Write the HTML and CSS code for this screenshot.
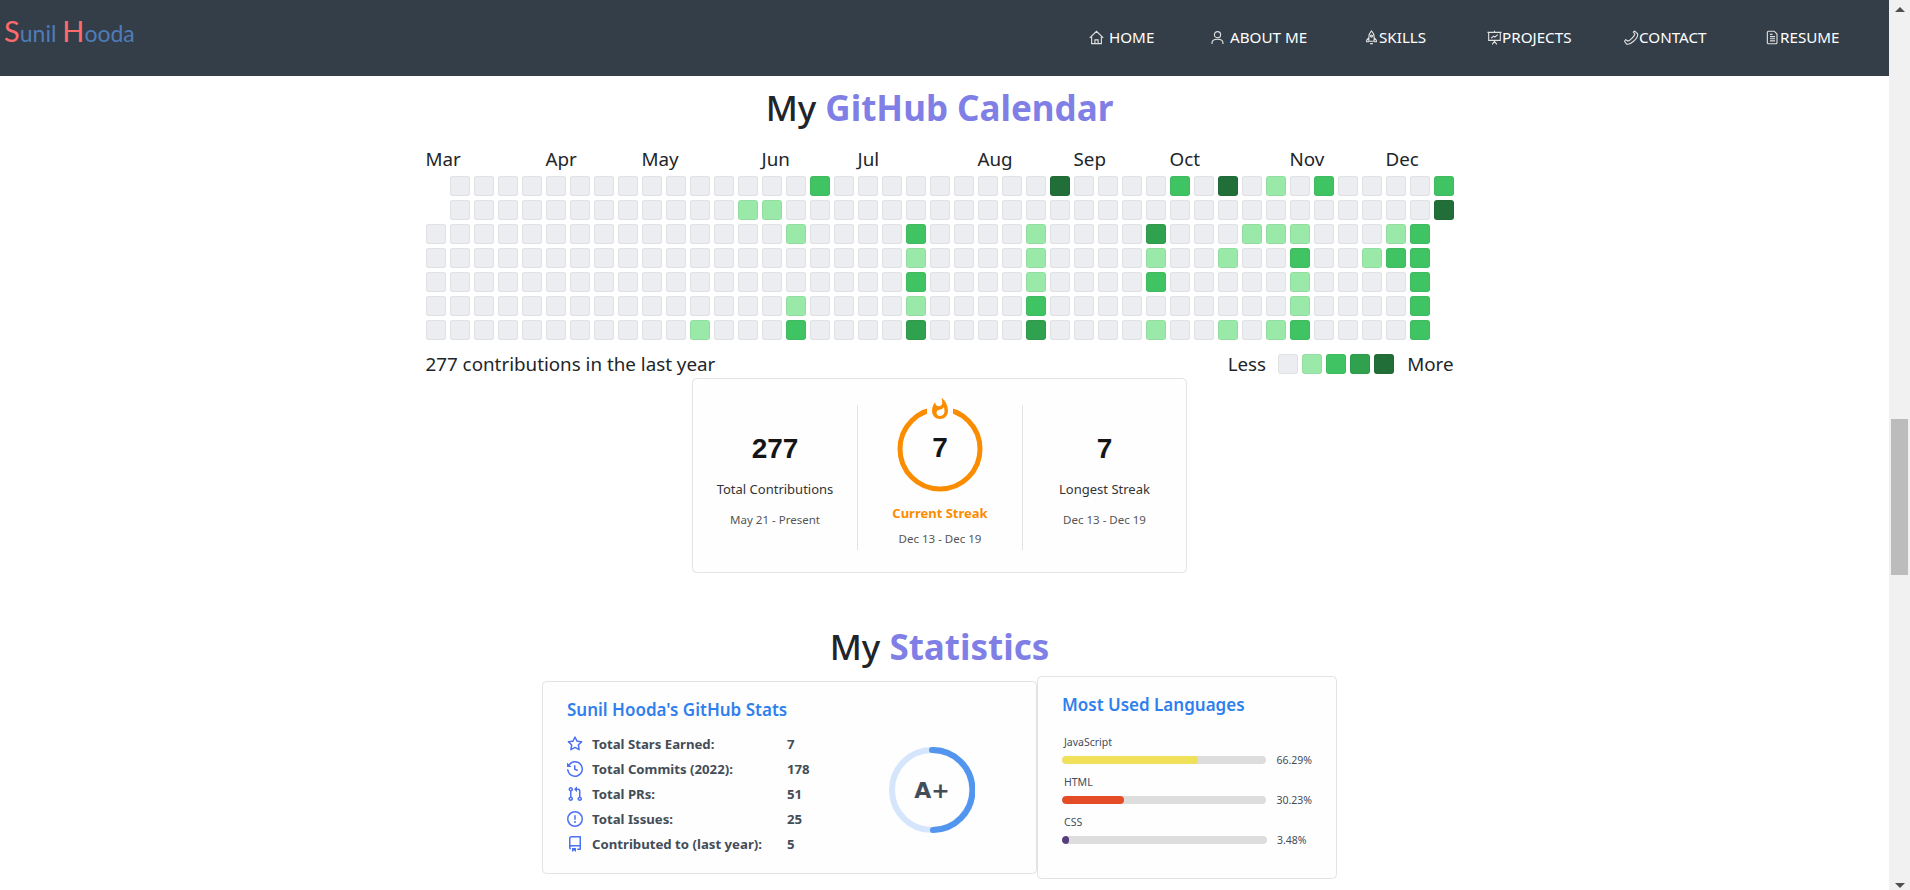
FILE: index.html
```html
<!DOCTYPE html>
<html lang="en">
<head>
    <meta charset="UTF-8">
    <title>Sunil Hooda</title>
    <link rel="stylesheet" href="styles.css">
</head>
<body>
    <div class="page">
        <nav class="navbar">
            <a class="logo"><span class="logo-cap">S</span>unil <span class="logo-cap">H</span>ooda</a>
            <ul class="nav-links">
                <li class="nav-item"><svg class="nav-icon" viewBox="0 0 16 16"><path d="M.8 8.500 8 1.500l7.200 7M2.800 7v7.500h10.400V7M6.300 14.500V10.500h3.400v4"/></svg><span class="nav-gap">HOME</span></li>
                <li class="nav-item"><svg class="nav-icon" viewBox="0 0 16 16"><circle cx="8" cy="5" r="3.300"/><path d="M2.200 15v-1.500c0-2.200 2.200-3.700 5.800-3.700s5.800 1.500 5.800 3.700V15"/></svg><span class="nav-gap">ABOUT ME</span></li>
                <li class="nav-item"><svg class="nav-icon" viewBox="0 0 16 16"><path d="M8 1c1.800 1.800 2.800 3.800 2.800 6.500V12H5.200V7.500C5.200 4.800 6.200 2.800 8 1zM5.200 8 2.800 11v1.500h2.400M10.800 8l2.400 3v1.500h-2.400M6.500 14.500h3"/><circle cx="8" cy="6.500" r="1.100"/></svg><span>SKILLS</span></li>
                <li class="nav-item"><svg class="nav-icon" viewBox="0 0 16 16"><path d="M.5 2.500h15M1.800 2.500v8.500h12.400V2.500M8 .8v1.700M4.500 8.800 7 6.500l1.500 1L11.500 5M8 11v1.200M5.500 15.300 8 12.200l2.500 3.100"/></svg><span>PROJECTS</span></li>
                <li class="nav-item"><svg class="nav-icon" viewBox="0 0 16 16"><path d="M10 2.200l1.500-1 3 2.800c.5 2-1.500 5.500-4.300 8s-6.200 3.500-7.700 2.800L.5 12l1.300-1.700 2.500 1.500c2-.5 6.500-5 7.300-7.300z"/></svg><span>CONTACT</span></li>
                <li class="nav-item"><svg class="nav-icon" viewBox="0 0 16 16"><path d="M3.800 1.300h6l3 3v9c0 .8-.5 1.400-1.300 1.400H3.800c-.8 0-1.300-.6-1.300-1.400V2.700c0-.8.500-1.400 1.300-1.400zM5.300 7h5.400M5.300 9.300h5.400M5.300 11.600h5.400M5.300 4.700h2.700"/></svg><span>RESUME</span></li>
            </ul>
        </nav>

        <main class="content">
            <h2 class="section-title">My <span class="accent">GitHub Calendar</span></h2>

            <div class="calendar">
                <div class="cal-months" id="calMonths"></div>
                <div class="cal-grid" id="calGrid"></div>
                <div class="cal-footer">
                    <span>277 contributions in the last year</span>
                    <div class="legend">
                        <span class="legend-less">Less</span>
                        <i class="cell lv0"></i>
                        <i class="cell lv1"></i>
                        <i class="cell lv2"></i>
                        <i class="cell lv3"></i>
                        <i class="cell lv4"></i>
                        <span class="legend-more">More</span>
                    </div>
                </div>
            </div>

            <div class="card streak-card">
                <div class="streak-col">
                    <div class="streak-num">277</div>
                    <div class="streak-label">Total Contributions</div>
                    <div class="streak-date">May 21 - Present</div>
                </div>
                <div class="streak-col streak-mid">
                    <div class="ring-wrap">
                        <svg class="streak-ring" viewBox="0 0 90 100">
                            <circle cx="45" cy="51" r="40" fill="none" stroke="#fb8c00" stroke-width="5"/>
                            <rect x="32" y="0" width="26" height="25" fill="#fff"/>
                            <path transform="translate(45 -1)" fill="#fb8c00" d="M 1.5 0.67 C 1.5 0.67 2.24 3.32 2.24 5.47 C 2.24 7.53 0.89 9.2 -1.17 9.2 C -3.23 9.2 -4.79 7.53 -4.79 5.47 L -4.76 5.11 C -6.78 7.51 -8 10.62 -8 13.99 C -8 18.41 -4.42 22 0 22 C 4.42 22 8 18.41 8 13.99 C 8 8.6 5.41 3.79 1.5 0.67 Z M -0.29 19 C -2.07 19 -3.51 17.6 -3.51 15.86 C -3.51 14.24 -2.46 13.1 -0.7 12.74 C 1.07 12.38 2.9 11.53 3.92 10.16 C 4.31 11.45 4.51 12.81 4.51 14.2 C 4.51 16.85 2.36 19 -0.29 19 Z"/>
                        </svg>
                        <div class="streak-num ring-num">7</div>
                    </div>
                    <div class="streak-current">Current Streak</div>
                    <div class="streak-date streak-date-mid">Dec 13 - Dec 19</div>
                </div>
                <div class="streak-col">
                    <div class="streak-num">7</div>
                    <div class="streak-label">Longest Streak</div>
                    <div class="streak-date">Dec 13 - Dec 19</div>
                </div>
            </div>

            <h2 class="section-title stats-title">My <span class="accent">Statistics</span></h2>

            <div class="stats-row">
                <div class="card stats-card">
                    <h3 class="card-title">Sunil Hooda's GitHub Stats</h3>
                    <div class="stats-body">
                        <ul class="stats-list">
                            <li class="stats-item"><svg class="octicon" viewBox="0 0 16 16"><path fill-rule="evenodd" d="M8 .25a.75.75 0 01.673.418l1.882 3.815 4.21.612a.75.75 0 01.416 1.279l-3.046 2.97.719 4.192a.75.75 0 01-1.088.791L8 12.347l-3.766 1.98a.75.75 0 01-1.088-.79l.72-4.194L.818 6.374a.75.75 0 01.416-1.28l4.21-.611L7.327.668A.75.75 0 018 .25zm0 2.445L6.615 5.5a.75.75 0 01-.564.41l-3.097.45 2.24 2.184a.75.75 0 01.216.664l-.528 3.084 2.769-1.456a.75.75 0 01.698 0l2.77 1.456-.53-3.084a.75.75 0 01.216-.664l2.24-2.183-3.096-.45a.75.75 0 01-.564-.41L8 2.694v.001z"/></svg><span>Total Stars Earned:</span><span>7</span></li>
                            <li class="stats-item"><svg class="octicon" viewBox="0 0 16 16"><path fill-rule="evenodd" d="M1.643 3.143L.427 1.927A.25.25 0 000 2.104V5.75c0 .138.112.25.25.25h3.646a.25.25 0 00.177-.427L2.715 4.215a6.5 6.5 0 11-1.18 4.458.75.75 0 10-1.493.154 8.001 8.001 0 101.6-5.684zM7.75 4a.75.75 0 01.75.75v2.992l2.028.812a.75.75 0 01-.557 1.392l-2.5-1A.75.75 0 017 8.25v-3.5A.75.75 0 017.75 4z"/></svg><span>Total Commits (2022):</span><span>178</span></li>
                            <li class="stats-item"><svg class="octicon" viewBox="0 0 16 16"><path fill-rule="evenodd" d="M7.177 3.073L9.573.677A.25.25 0 0110 .854v4.792a.25.25 0 01-.427.177L7.177 3.427a.25.25 0 010-.354zM3.75 2.5a.75.75 0 100 1.5.75.75 0 000-1.5zm-2.25.75a2.25 2.25 0 113 2.122v5.256a2.251 2.251 0 11-1.5 0V5.372A2.25 2.25 0 011.5 3.25zM11 2.5h-1V4h1a1 1 0 011 1v5.628a2.251 2.251 0 101.5 0V5A2.5 2.5 0 0011 2.5zm1 10.25a.75.75 0 111.5 0 .75.75 0 01-1.5 0zM3.75 12a.75.75 0 100 1.5.75.75 0 000-1.5z"/></svg><span>Total PRs:</span><span>51</span></li>
                            <li class="stats-item"><svg class="octicon" viewBox="0 0 16 16"><path fill-rule="evenodd" d="M8 1.5a6.5 6.5 0 100 13 6.5 6.5 0 000-13zM0 8a8 8 0 1116 0A8 8 0 010 8zm9 3a1 1 0 11-2 0 1 1 0 012 0zm-.25-6.25a.75.75 0 00-1.5 0v3.5a.75.75 0 001.5 0v-3.5z"/></svg><span>Total Issues:</span><span>25</span></li>
                            <li class="stats-item"><svg class="octicon" viewBox="0 0 16 16"><path fill-rule="evenodd" d="M2 2.500A2.500 2.500 0 014.500 0h8.750a.75.75 0 01.75.75v12.500a.75.75 0 01-.75.75h-2.500a.75.75 0 110-1.500h1.750v-2h-8a1 1 0 00-.714 1.700.75.75 0 01-1.072 1.050A2.495 2.495 0 012 11.500v-9zm10.500-1V9h-8c-.356 0-.694.074-1 .208V2.500a1 1 0 011-1h8zM5 12.250v3.250a.25.25 0 00.4.2l1.450-1.087a.25.25 0 01.3 0L8.600 15.700a.25.25 0 00.4-.2v-3.250a.25.25 0 00-.25-.25h-3.500a.25.25 0 00-.25.25z"/></svg><span>Contributed to (last year):</span><span>5</span></li>
                        </ul>
                        <div class="grade">
                            <svg class="grade-ring" viewBox="0 0 86 86">
                                <circle cx="43" cy="43" r="40" fill="none" stroke="#d5e5fb" stroke-width="6"/>
                                <path d="M43 3a40 40 0 0 1 1 80" fill="none" stroke="#5295ef" stroke-width="6" stroke-linecap="round"/>
                            </svg>
                            <span class="grade-text">A+</span>
                        </div>
                    </div>
                </div>

                <div class="card lang-card">
                    <h3 class="card-title lang-title">Most Used Languages</h3>
                    <div class="lang-item">
                        <div class="lang-name">JavaScript</div>
                        <div class="lang-line">
                            <div class="lang-bar"><div class="lang-fill js" style="width: 66.29%"></div></div>
                            <span class="lang-pct">66.29%</span>
                        </div>
                    </div>
                    <div class="lang-item">
                        <div class="lang-name">HTML</div>
                        <div class="lang-line">
                            <div class="lang-bar"><div class="lang-fill html" style="width: 30.23%"></div></div>
                            <span class="lang-pct">30.23%</span>
                        </div>
                    </div>
                    <div class="lang-item">
                        <div class="lang-name">CSS</div>
                        <div class="lang-line">
                            <div class="lang-bar"><div class="lang-fill css" style="width: 3.48%"></div></div>
                            <span class="lang-pct">3.48%</span>
                        </div>
                    </div>
                </div>
            </div>
        </main>
    </div>

    <div class="scrollbar">
        <span class="arrow-up"></span>
        <span class="thumb"></span>
        <span class="arrow-down"></span>
    </div>

    <script src="calendar.js"></script>
</body>
</html>
```

FILE: styles.css
```css
* {
    box-sizing: border-box;
}

html, body {
    height: 100%;
}

body {
    display: flex;
    margin: 0;
    overflow: hidden;
    background-color: #fff;
    color: #212529;
    font-family: 'Noto Sans', 'Open Sans', sans-serif;
}

.page {
    flex: 1;
    min-width: 0;
}

/* navbar */
.navbar {
    display: flex;
    justify-content: space-between;
    height: 76px;
    background-color: #343e48;
}

.logo {
    padding: 14px 0 0 4px;
    color: #4f7cb8;
    font-family: 'Lato', sans-serif;
    font-size: 23px;
    line-height: 34px;
}

.logo-cap {
    color: #ff6b6b;
    font-size: 29px;
}

.nav-links {
    display: grid;
    grid-template-columns: 121px 154px 123px 137px 141px 124px;
    align-items: center;
    margin: 0;
    padding: 0 0 2px;
    list-style: none;
}

.nav-item {
    display: flex;
    align-items: center;
    color: #fff;
    font-size: 15.200px;
}

.nav-gap {
    margin-left: 5px;
}

.nav-icon {
    width: 15px;
    height: 15px;
    fill: none;
    stroke: #e0e0e0;
    stroke-width: 1.200;
}

/* sections */
.content {
    display: flex;
    flex-direction: column;
    align-items: center;
    padding-right: 10px;
}

.section-title {
    margin: 9px 0 0;
    font-size: 35px;
    font-weight: 500;
    line-height: 46px;
}

.stats-title {
    margin-top: 51px;
}

.accent {
    color: #7f7fe6;
    font-weight: 700;
}

/* calendar */
.calendar {
    width: 1028px;
    margin-top: 16px;
    font-size: 18.800px;
}

.cal-months {
    display: grid;
    grid-template-columns: repeat(43, 20px);
    column-gap: 4px;
    height: 24px;
    line-height: 24px;
    white-space: nowrap;
}

.cal-grid {
    display: grid;
    grid-template-rows: repeat(7, 20px);
    grid-auto-columns: 20px;
    grid-auto-flow: column;
    gap: 4px;
    margin-top: 5px;
}

.cell {
    display: block;
    width: 20px;
    height: 20px;
    border: 1px solid rgba(27, 31, 35, 0.06);
    border-radius: 3px;
}

.blank {
    visibility: hidden;
}

.lv0 { background-color: #ebedf0; }
.lv1 { background-color: #9be9a8; }
.lv2 { background-color: #40c463; }
.lv3 { background-color: #30a14e; }
.lv4 { background-color: #216e39; }

.cal-footer {
    display: flex;
    justify-content: space-between;
    align-items: center;
    height: 24px;
    margin-top: 12px;
}

.legend {
    display: flex;
    align-items: center;
    gap: 4px;
}

.legend-less {
    margin-right: 8px;
}

.legend-more {
    margin-left: 9px;
}

/* cards */
.card {
    border: 1px solid #e4e2e2;
    border-radius: 4.500px;
    background-color: #fffefe;
}

.streak-card {
    display: grid;
    grid-template-columns: 164px 166px 163px;
    width: 495px;
    height: 195px;
    margin-top: 2px;
    padding: 26px 0 22px;
}

.streak-col {
    padding-top: 27px;
    text-align: center;
}

.streak-mid {
    padding-top: 0;
    border-left: 1px solid #e4e2e2;
    border-right: 1px solid #e4e2e2;
}

.streak-num {
    font-family: 'Liberation Sans', sans-serif;
    font-size: 28px;
    font-weight: 700;
    line-height: 34px;
    color: #151515;
}

.streak-label {
    margin-top: 13px;
    font-size: 13px;
    line-height: 20px;
    color: #333;
}

.streak-date {
    margin-top: 13px;
    font-size: 11.500px;
    line-height: 16px;
    color: #555;
}

.streak-date-mid {
    margin-top: 8px;
}

.ring-wrap {
    display: grid;
    place-items: center;
    height: 100px;
    margin-top: -7px;
}

.streak-ring,
.ring-num {
    grid-area: 1 / 1;
}

.streak-ring {
    width: 90px;
    height: 100px;
}

.streak-current {
    margin-top: 5px;
    color: #fb8c00;
    font-size: 13px;
    font-weight: 700;
    line-height: 20px;
}

.stats-row {
    display: flex;
    align-items: center;
    margin-top: 6px;
}

.card-title {
    margin: 0;
    color: #2f80ed;
    font-size: 17px;
    font-weight: 600;
    line-height: 24px;
}

.stats-card {
    width: 495px;
    height: 193px;
    padding: 16px 24px 0;
}

.stats-body {
    display: flex;
    margin-top: 9px;
}

.stats-list {
    width: 322px;
    margin: 0;
    padding: 0;
    list-style: none;
}

.stats-item {
    display: grid;
    grid-template-columns: 25px 195px auto;
    align-items: center;
    height: 25px;
    color: #434d58;
    font-size: 13.200px;
    font-weight: 700;
}

.octicon {
    width: 16px;
    height: 16px;
    fill: #4c71f2;
}

.grade {
    display: grid;
    place-items: center;
    width: 86px;
    height: 86px;
    margin-top: 16px;
}

.grade-ring,
.grade-text {
    grid-area: 1 / 1;
}

.grade-ring {
    width: 86px;
    height: 86px;
}

.grade-text {
    color: #434d58;
    font-family: 'DejaVu Sans', sans-serif;
    font-size: 22px;
    font-weight: 700;
}

.lang-card {
    width: 300px;
    height: 203px;
    padding: 16px 24px 0;
}

.lang-title {
    margin: 0 0 17px;
}

.lang-item {
    height: 40px;
}

.lang-name {
    padding-left: 2px;
    color: #434d58;
    font-size: 10.500px;
    line-height: 16px;
}

.lang-line {
    display: flex;
    align-items: center;
    gap: 10px;
    margin-top: 6px;
}

.lang-bar {
    width: 205px;
    height: 8px;
    border-radius: 5px;
    background-color: #ddd;
    overflow: hidden;
}

.lang-fill {
    height: 100%;
    border-radius: 5px;
}

.js { background-color: #f1e05a; }
.html { background-color: #e34c26; }
.css { background-color: #563d7c; }

.lang-pct {
    color: #434d58;
    font-size: 10.500px;
    line-height: 8px;
}

/* fake window scrollbar */
.scrollbar {
    display: flex;
    flex-direction: column;
    align-items: center;
    width: 21px;
    height: 890px;
    padding-top: 7px;
    background-color: #f1f1f1;
}

.arrow-up {
    border-left: 5px solid transparent;
    border-right: 5px solid transparent;
    border-bottom: 5px solid #505050;
}

.thumb {
    width: 17px;
    height: 156px;
    margin-top: 407px;
    background-color: #bcbcbc;
}

.arrow-down {
    margin-top: 308px;
    border-left: 5px solid transparent;
    border-right: 5px solid transparent;
    border-top: 5px solid #505050;
}
```

FILE: calendar.js
```js
var months = [['Mar', 0], ['Apr', 5], ['May', 9], ['Jun', 14], ['Jul', 18], ['Aug', 23], ['Sep', 27], ['Oct', 31], ['Nov', 36], ['Dec', 40]];

// row -> { column: level }, everything else is level 0
var levels = [
    { 16: 2, 26: 4, 31: 2, 33: 4, 35: 1, 37: 2, 42: 2 },
    { 13: 1, 14: 1, 42: 4 },
    { 15: 1, 20: 2, 25: 1, 30: 3, 34: 1, 35: 1, 36: 1, 40: 1, 41: 2 },
    { 20: 1, 25: 1, 30: 1, 33: 1, 36: 2, 39: 1, 40: 2, 41: 2 },
    { 20: 2, 25: 1, 30: 2, 36: 1, 41: 2 },
    { 15: 1, 20: 1, 25: 2, 36: 1, 41: 2 },
    { 11: 1, 15: 2, 20: 3, 25: 3, 30: 1, 33: 1, 35: 1, 36: 2, 41: 2 }
];

var monthRow = document.getElementById('calMonths');
months.forEach(function (m) {
    var label = document.createElement('span');
    label.textContent = m[0];
    label.style.gridColumnStart = m[1] + 1;
    label.style.gridRowStart = 1;
    monthRow.appendChild(label);
});

var grid = document.getElementById('calGrid');
for (var col = 0; col < 43; col++) {
    for (var row = 0; row < 7; row++) {
        if (col === 42 && row > 1) continue;
        var cell = document.createElement('i');
        cell.className = 'cell lv' + (levels[row][col] || 0);
        if (col === 0 && row < 2) cell.className += ' blank';
        grid.appendChild(cell);
    }
}
```
